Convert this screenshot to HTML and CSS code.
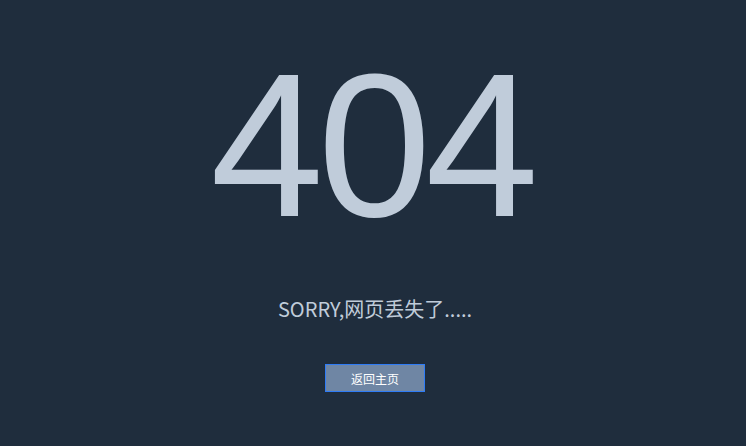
FILE: index.html
```html
<!DOCTYPE html>
<html lang="zh-CN">
<head>
<meta charset="utf-8">
<title>404</title>
<link rel="stylesheet" href="styles.css">
</head>
<body>
<main class="page">
  <div class="code">404</div>
  <p class="msg">SORRY,网页丢失了.....</p>
  <button class="home-btn" type="button">返回主页</button>
</main>
</body>
</html>
```
FILE: styles.css
```css
html, body {
  margin: 0;
  padding: 0;
  height: 100%;
  background: #1f2d3d;
}
.page {
  display: flex;
  flex-direction: column;
  align-items: center;
  height: 100%;
  box-sizing: border-box;
  padding: 30px 0 0 4px;
}
.code {
  margin-left: -7px;
  font-family: "Liberation Sans", Arial, sans-serif;
  font-size: 204px;
  letter-spacing: -6px;
  line-height: 230px;
  color: #c0ccda;
}
.msg {
  margin: 36px 0 0;
  font-family: "Noto Sans CJK SC", "Noto Sans", sans-serif;
  font-size: 20px;
  line-height: 26px;
  color: #c0ccda;
}
.home-btn {
  margin-top: 42px;
  width: 100px;
  height: 28px;
  padding: 0;
  border: 1px solid #2f7cf6;
  background: #6f86a4;
  color: #ffffff;
  font-family: "Noto Sans CJK SC", sans-serif;
  font-size: 12px;
  cursor: pointer;
}
```
